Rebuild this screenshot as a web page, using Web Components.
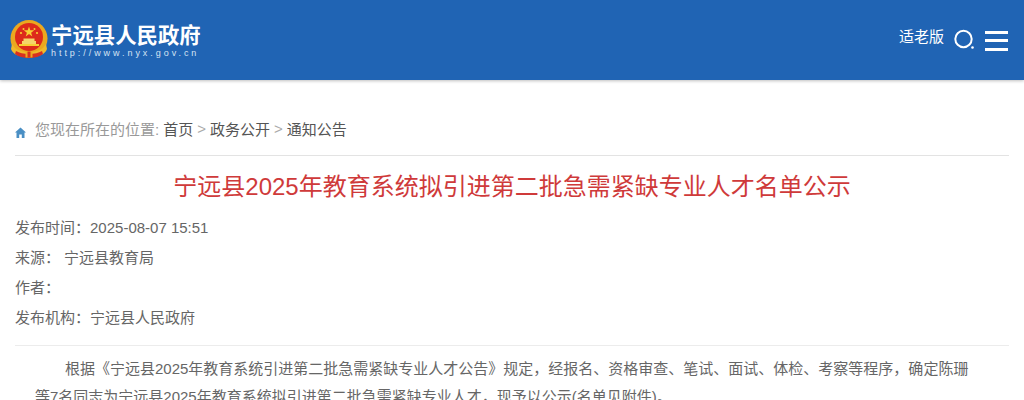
<!DOCTYPE html>
<html lang="zh-CN">
<head>
<meta charset="utf-8">
<title>宁远县人民政府</title>
<style>
  html, body { margin: 0; padding: 0; height: 400px; overflow: hidden; background: #fff; }
  body { font-family: "Liberation Sans", "Noto Sans CJK SC", sans-serif; }
</style>
</head>
<body>
<site-header></site-header>
<page-main>
  <bread-crumb>
    <a>首页</a><a>政务公开</a><a>通知公告</a>
  </bread-crumb>
  <article-head>宁远县2025年教育系统拟引进第二批急需紧缺专业人才名单公示</article-head>
  <meta-row label="发布时间&#xFF1A;">2025-08-07 15:51</meta-row>
  <meta-row label="来源&#xFF1A;" gap="4">宁远县教育局</meta-row>
  <meta-row label="作者&#xFF1A;"></meta-row>
  <meta-row label="发布机构&#xFF1A;">宁远县人民政府</meta-row>
  <article-body>
    <p>根据《宁远县2025年教育系统引进第二批急需紧缺专业人才公告》规定&#xFF0C;经报名、资格审查、笔试、面试、体检、考察等程序&#xFF0C;确定陈珊</p>
    <p class="cont">等7名同志为宁远县2025年教育系统拟引进第二批急需紧缺专业人才&#xFF0C;现予以公示(名单见附件)。</p>
  </article-body>
</page-main>

<script>
class SiteHeader extends HTMLElement {
  constructor() {
    super();
    this.attachShadow({ mode: 'open' });
  }

  connectedCallback() {
    this.shadowRoot.innerHTML = `
      <style>
        :host { display: flex; align-items: center; justify-content: space-between; height: 80px; background: #2064b4; box-shadow: 0 1px 3px rgba(0,0,0,.25); color: #fff; position: relative; }
        .logo { display: flex; align-items: center; gap: 3px; padding-left: 10px; }
        .names { display: flex; flex-direction: column; margin-top: 3px; }
        .name { font-size: 21.4px; font-weight: 700; line-height: 24px; white-space: nowrap; }
        .url { font-size: 9px; line-height: 11px; letter-spacing: 2.95px; white-space: nowrap; color: #d5e3f3; }
        .tools { display: flex; align-items: center; padding-right: 16px; }
        .old { font-size: 15px; margin: -10px 9px 0 0; }
        .search { margin-right: 10px; }
        .menu { margin-top: 2px; }
        svg { display: block; }
      </style>
      <div class="logo">
        <svg width="38" height="40" viewBox="0 0 38 40">
          <circle cx="19" cy="18.500" r="18.500" fill="#eba81f"/>
          <circle cx="19" cy="17" r="14" fill="#dd2a1b"/>
          <path d="M19 6.500l1.300 3.800h4l-3.200 2.400 1.200 3.800-3.300-2.400-3.300 2.400 1.200-3.800-3.200-2.400h4z" fill="#f7cf33"/>
          <circle cx="11" cy="13" r="1.100" fill="#f7cf33"/><circle cx="27" cy="13" r="1.100" fill="#f7cf33"/>
          <circle cx="13.500" cy="9" r="1" fill="#f7cf33"/><circle cx="24.500" cy="9" r="1" fill="#f7cf33"/>
          <path d="M12 24v-3h1.500v-2.500h11V21H26v3z" fill="#f5d56a"/>
          <path d="M9 24h20v2H9z" fill="#f7cf33"/>
          <path d="M2 24q4 8 17 8t17-8l1 5q-3 8-18 8T1 29z" fill="#f0b92b"/>
          <path d="M6 31q5 3 13 3t13-3l1 3q-5 4-14 4T5 34z" fill="#d8301f"/>
          <path d="M15.500 31.500h7v6h-7z" fill="#eba81f"/>
          <path d="M17.500 31.500h3v6h-3z" fill="#d8301f"/>
        </svg>
        <div class="names">
          <span class="name">宁远县人民政府</span>
          <span class="url">http://www.nyx.gov.cn</span>
        </div>
      </div>
      <div class="tools">
        <span class="old">适老版</span>
        <svg class="search" width="22" height="22" viewBox="0 0 22 22" fill="none">
          <circle cx="10.500" cy="10" r="8.200" stroke="#fff" stroke-width="2"/>
          <circle cx="19.500" cy="18.500" r="1.300" fill="#fff"/>
        </svg>
        <svg class="menu" width="23" height="20" viewBox="0 0 23 20" fill="#fff">
          <rect y="0" width="23" height="3"/><rect y="8" width="23" height="3"/><rect y="17" width="23" height="3"/>
        </svg>
      </div>`;
  }
}

class PageMain extends HTMLElement {
  constructor() {
    super();
    this.attachShadow({ mode: 'open' });
    this.shadowRoot.innerHTML = `
      <style>
        :host { display: block; padding: 0 15px; }
      </style>
      <slot></slot>`;
  }
}

class BreadCrumb extends HTMLElement {
  constructor() {
    super();
    this.attachShadow({ mode: 'open' });
  }

  connectedCallback() {
    const names = [...this.querySelectorAll('a')].map(a => a.textContent);
    const links = names.map(n => `<span class="link">${n}</span>`).join('<span class="sep">&gt;</span>');
    this.shadowRoot.innerHTML = `
      <style>
        :host { display: flex; align-items: center; height: 76px; box-sizing: border-box; padding-top: 22px; border-bottom: 1px solid #e3e3e3; font-size: 15px; color: #999; white-space: nowrap; }
        svg { margin: 7px 9px 0 0; display: block; }
        .link { color: #555; }
        .here { margin-right: 4px; }
        .sep { margin: 0 4px; color: #aaa; }
      </style>
      <svg width="11" height="11" viewBox="0 0 11 11" fill="#4a8fc4"><path d="M5.500.5L11 5.500H9.500V11H6.800V7.500H4.200V11H1.500V5.500H0z"/></svg>
      <span class="here">您现在所在的位置:</span>${links}`;
  }
}

class ArticleHead extends HTMLElement {
  constructor() {
    super();
    this.attachShadow({ mode: 'open' });
    this.shadowRoot.innerHTML = `
      <style>
        :host { display: block; margin-top: 15px; margin-bottom: 10px; text-align: center; font-size: 24px; line-height: 32px; color: #cf3a3a; }
      </style>
      <slot></slot>`;
  }
}

class MetaRow extends HTMLElement {
  constructor() {
    super();
    this.attachShadow({ mode: 'open' });
  }

  connectedCallback() {
    this.shadowRoot.innerHTML = `
      <style>
        :host { display: block; height: 30px; line-height: 30px; font-size: 15px; color: #666; white-space: nowrap; }
        .val { margin-left: ${this.getAttribute('gap') || 0}px; }
      </style>
      <span>${this.getAttribute('label')}</span><span class="val"><slot></slot></span>`;
  }
}

class ArticleBody extends HTMLElement {
  constructor() {
    super();
    this.attachShadow({ mode: 'open' });
    this.shadowRoot.innerHTML = `
      <style>
        :host { display: block; margin-top: 12px; border-top: 1px solid #ececec; padding: 9px 40px 0 20px; font-size: 15px; line-height: 28px; color: #666; }
        ::slotted(p) { margin: 0; text-indent: 2em; white-space: nowrap; }
        ::slotted(p.cont) { text-indent: 0; }
      </style>
      <slot></slot>`;
  }
}

customElements.define('site-header', SiteHeader);
customElements.define('page-main', PageMain);
customElements.define('bread-crumb', BreadCrumb);
customElements.define('article-head', ArticleHead);
customElements.define('meta-row', MetaRow);
customElements.define('article-body', ArticleBody);
</script>
</body>
</html>
